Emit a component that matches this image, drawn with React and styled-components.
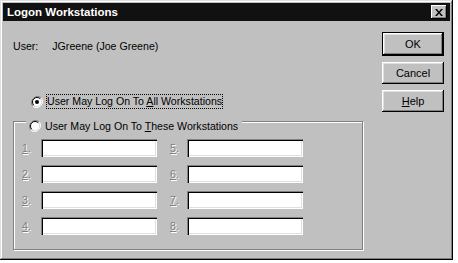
import React from "react";
import styled, { createGlobalStyle } from "styled-components";

const GlobalStyle = createGlobalStyle`
  html, body {
    margin: 0;
    padding: 0;
    background: #ffffff;
  }
  body {
    font-family: "Liberation Sans", Arial, sans-serif;
    font-size: 11px;
    color: #000;
  }
`;

function Radio({ checked }) {
  return (
    <svg width="12" height="12" viewBox="0 0 12 12">
      <path d="M10.2 1.8 A6 6 0 0 0 1.8 10.2" fill="none" stroke="#808080" strokeWidth="1" />
      <path d="M1.8 10.2 A6 6 0 0 0 10.2 1.8" fill="none" stroke="#ffffff" strokeWidth="1" />
      <circle cx="6" cy="6" r="4.6" fill="#ffffff" />
      <path d="M9.2 2.8 A4.5 4.5 0 0 0 2.8 9.2" fill="none" stroke="#000" strokeWidth="1" />
      <path d="M2.8 9.2 A4.5 4.5 0 0 0 9.2 2.8" fill="none" stroke="#dfdfdf" strokeWidth="1" />
      {checked && <circle cx="6" cy="6" r="2" fill="#000" />}
    </svg>
  );
}

function Accel({ text, at }) {
  return (
    <>
      {text.slice(0, at)}
      <u>{text[at]}</u>
      {text.slice(at + 1)}
    </>
  );
}

export default function App() {
  const left = [1, 2, 3, 4];
  const right = [5, 6, 7, 8];
  return (
    <>
      <GlobalStyle />
      <Window>
        <TitleBar>
          <Title>Logon Workstations</Title>
          <CloseBox>
            <svg width="8" height="7" viewBox="0 0 8 7">
              <path d="M0 0h2l2 2.5L6 0h2L5 3.5 8 7H6L4 4.5 2 7H0l3-3.5z" fill="#000" />
            </svg>
          </CloseBox>
        </TitleBar>
        <Body>
          <Main>
            <UserRow>
              <span>User:</span>
              <UserName>JGreene (Joe Greene)</UserName>
            </UserRow>
            <RadioRow>
              <Radio checked />
              <Focus>
                User May Log On To <u>A</u>ll Workstations
              </Focus>
            </RadioRow>
            <Group>
              <Legend>
                <Radio />
                <LegendText>
                  User May Log On To <u>T</u>hese Workstations
                </LegendText>
              </Legend>
              <Grid>
                {left.map((n, i) => (
                  <React.Fragment key={n}>
                    <Num>
                      <u>{n}</u>.
                    </Num>
                    <Field />
                    <Num $second>
                      <u>{right[i]}</u>.
                    </Num>
                    <Field />
                  </React.Fragment>
                ))}
              </Grid>
            </Group>
          </Main>
          <Buttons>
            <DefaultFrame>
              <Button>OK</Button>
            </DefaultFrame>
            <Button>Cancel</Button>
            <Button>
              <Accel text="Help" at={0} />
            </Button>
          </Buttons>
        </Body>
      </Window>
    </>
  );
}

const Window = styled.div`
  width: 453px;
  height: 260px;
  box-sizing: border-box;
  padding: 3px;
  background: #c0c0c0;
  box-shadow: inset -1px -1px 0 #000, inset 1px 1px 0 #dfdfdf,
    inset -2px -2px 0 #808080, inset 2px 2px 0 #ffffff;
  display: flex;
  flex-direction: column;
`;

const TitleBar = styled.div`
  height: 18px;
  background: #111111;
  display: flex;
  align-items: center;
  justify-content: space-between;
  padding: 0 3px 0 4px;
`;

const Title = styled.div`
  color: #fff;
  font-weight: bold;
  font-size: 11.5px;
`;

const CloseBox = styled.div`
  width: 16px;
  height: 14px;
  box-sizing: border-box;
  background: #c0c0c0;
  box-shadow: inset -1px -1px 0 #000, inset 1px 1px 0 #fff,
    inset -2px -2px 0 #808080;
  display: flex;
  align-items: center;
  justify-content: center;
`;

const Body = styled.div`
  flex: 1;
  display: flex;
  padding: 11px 0 0 10px;
  font-size: 10.6px;
`;

const Main = styled.div`
  width: 350px;
  display: flex;
  flex-direction: column;
`;

const UserRow = styled.div`
  display: flex;
  height: 13px;
  line-height: 13px;
  margin-top: 8px;
`;

const UserName = styled.span`
  margin-left: 14px;
`;

const RadioRow = styled.div`
  display: flex;
  align-items: center;
  gap: 3px;
  margin: 41px 0 0 18px;
  height: 15px;
`;

const Focus = styled.span`
  padding: 1px 1px;
  outline: 1px dotted #000;
  outline-offset: -1px;
  line-height: 13px;
`;

const Group = styled.div`
  margin-top: 12px;
  height: 129px;
  box-sizing: border-box;
  border: 1px solid #808080;
  box-shadow: 1px 1px 0 #fff, inset 1px 1px 0 #fff;
  padding: 0 0 0 8px;
`;

const Legend = styled.div`
  display: inline-flex;
  align-items: center;
  gap: 4px;
  background: #c0c0c0;
  padding: 0 4px 0 3px;
  margin: -7px 0 0 4px;
  height: 13px;
`;

const LegendText = styled.span`
  line-height: 13px;
`;

const Grid = styled.div`
  display: grid;
  grid-template-columns: 19px 116px 30px 116px;
  grid-auto-rows: 18px;
  row-gap: 8px;
  margin-top: 5px;
  align-items: center;
`;

const Num = styled.span`
  color: #808080;
  text-shadow: 1px 1px 0 #fff;
  padding-left: ${(p) => (p.$second ? "13px" : "0")};
`;

const Field = styled.div`
  height: 18px;
  box-sizing: border-box;
  background: #fff;
  box-shadow: inset 1px 1px 0 #808080, inset 2px 2px 0 #000,
    inset -1px -1px 0 #fff, inset -2px -2px 0 #dfdfdf;
`;

const Buttons = styled.div`
  margin-left: 19px;
  display: flex;
  flex-direction: column;
  gap: 6px;
`;

const DefaultFrame = styled.div`
  border: 1px solid #000;
  width: 62px;
  box-sizing: border-box;
  & > button {
    width: 60px;
  }
`;

const Button = styled.button`
  width: 62px;
  height: 22px;
  border: none;
  padding: 0;
  background: #c0c0c0;
  font-family: "Liberation Sans", Arial, sans-serif;
  font-size: 11px;
  color: #000;
  box-shadow: inset -1px -1px 0 #000, inset 1px 1px 0 #fff,
    inset -2px -2px 0 #808080, inset 2px 2px 0 #dfdfdf;
`;
